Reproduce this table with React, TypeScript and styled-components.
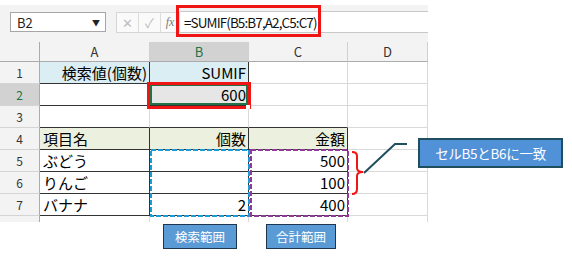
import React from "react";
import styled, { createGlobalStyle } from "styled-components";

const GlobalStyle = createGlobalStyle`
  html, body { margin: 0; padding: 0; background: #fff; }
  body { font-family: "Noto Sans CJK JP", "Noto Sans", sans-serif; }
`;

const DARK = "#333";
const GRID = "#d9d9d9";

const Page = styled.div`
  position: relative;
  width: 572px;
  height: 256px;
  overflow: hidden;
  background: #fff;
`;

const Sheet = styled.div`
  margin-top: 5px;
  width: 428px;
  background: #f3f3f3;
`;

const FormulaBar = styled.div`
  display: flex;
  align-items: flex-start;
  height: 37px;
  padding-top: 7px;
  box-sizing: border-box;
`;

const NameBox = styled.div`
  box-sizing: border-box;
  width: 96px;
  height: 20px;
  margin-left: 10px;
  padding: 0 5px 0 6px;
  background: #fff;
  border: 1px solid #a6a6a6;
  display: flex;
  align-items: center;
  justify-content: space-between;
  font-size: 13px;
  color: #222;
`;

const Arrow = styled.span`
  font-size: 8px;
  color: #222;
`;

const ButtonGroup = styled.div`
  box-sizing: border-box;
  display: flex;
  height: 21px;
  margin-left: 10px;
  background: #fafafa;
  border: 1px solid #d6d6d6;
  border-right: none;
`;

const BarButton = styled.div<{ $w: number }>`
  width: ${(p) => p.$w}px;
  display: flex;
  align-items: center;
  justify-content: center;
  border-right: 1px solid #dcdcdc;
  color: #bdbdbd;
  font-size: 13px;
`;

const Fx = styled.span`
  font-family: "Liberation Serif", serif;
  font-style: italic;
  font-size: 12px;
  color: #7a7a7a;
`;

const FormulaInput = styled.div`
  box-sizing: border-box;
  flex: 1;
  height: 22px;
  margin-top: -1px;
  padding-left: 4px;
  background: #fff;
  border-top: 1px solid #c8c8c8;
  border-bottom: 1px solid #c8c8c8;
  display: flex;
  align-items: center;
  font-size: 13.5px;
  letter-spacing: -0.9px;
  color: #111;
`;

const Grid = styled.div`
  display: grid;
  grid-template-columns: 40px 110px 99px 99px 80px;
  grid-template-rows: 20px repeat(8, 22px);
  height: 180px;
  overflow: hidden;
`;

const ColHead = styled.div<{ $sel?: boolean; $corner?: boolean }>`
  box-sizing: border-box;
  display: flex;
  align-items: center;
  justify-content: center;
  background: ${(p) => (p.$sel ? "#d2d2d2" : "#f3f3f3")};
  border-right: 1px solid ${(p) => (p.$corner ? "#ababab" : "#d0d0d0")};
  border-bottom: 1px solid #ababab;
  color: ${(p) => (p.$sel ? "#217346" : "#333")};
  font-size: 13px;
`;

const RowHead = styled.div<{ $sel?: boolean }>`
  box-sizing: border-box;
  display: flex;
  align-items: center;
  justify-content: center;
  background: ${(p) => (p.$sel ? "#d2d2d2" : "#f3f3f3")};
  border-right: 1px solid #ababab;
  border-bottom: 1px solid #d4d4d4;
  color: ${(p) => (p.$sel ? "#217346" : "#333")};
  font-size: 12px;
`;

const Cell = styled.div<{ $bg?: string; $align?: string; $r?: string; $b?: string; $active?: boolean }>`
  box-sizing: border-box;
  display: flex;
  align-items: center;
  justify-content: ${(p) => (p.$align === "right" ? "flex-end" : "flex-start")};
  padding: 0 2px 0 3px;
  background: ${(p) => p.$bg || "#fff"};
  border-right: 1px solid ${(p) => p.$r || GRID};
  border-bottom: 1px solid ${(p) => p.$b || GRID};
  box-shadow: ${(p) => (p.$active ? "inset 0 0 0 2px #217346" : "none")};
  font-size: 15px;
  color: #000;
  white-space: nowrap;
`;

const RedBox = styled.div<{ $x: number; $y: number; $w: number; $h: number }>`
  position: absolute;
  left: ${(p) => p.$x}px;
  top: ${(p) => p.$y}px;
  width: ${(p) => p.$w}px;
  height: ${(p) => p.$h}px;
  box-sizing: border-box;
  border: 3px solid #f01414;
`;

const Overlay = styled.svg`
  position: absolute;
  left: 0;
  top: 0;
  pointer-events: none;
`;

const Labels = styled.div`
  display: flex;
  gap: 29px;
  padding-left: 163px;
  margin-top: 2px;
`;

const Label = styled.div<{ $w: number }>`
  box-sizing: border-box;
  width: ${(p) => p.$w}px;
  height: 25px;
  display: flex;
  align-items: center;
  justify-content: center;
  background: #5b9bd5;
  border: 1px solid #1f3550;
  color: #fff;
  font-size: 12.5px;
`;

const Callout = styled.div`
  position: absolute;
  left: 418px;
  top: 138px;
  width: 145px;
  height: 30px;
  box-sizing: border-box;
  display: flex;
  align-items: center;
  justify-content: center;
  background: #5191d8;
  border: 2px solid #1f4e5f;
  color: #fff;
  font-size: 13.5px;
  letter-spacing: -0.3px;
`;

type C = { t?: string; align?: string; bg?: string; r?: string; b?: string; active?: boolean };

const BLUE = "#daeef3";
const GREEN = "#ebf1de";
const d = { r: DARK, b: DARK };

const rows: C[][] = [
  [
    { t: "検索値(個数)", align: "right", bg: BLUE, ...d },
    { t: "SUMIF", align: "right", bg: BLUE, ...d },
    {},
    {},
  ],
  [{ ...d }, { t: "600", align: "right", bg: "#e7e6e6", active: true, ...d }, {}, {}],
  [{ b: DARK }, { b: DARK }, { b: DARK }, {}],
  [
    { t: "項目名", bg: GREEN, ...d },
    { t: "個数", align: "right", bg: GREEN, ...d },
    { t: "金額", align: "right", bg: GREEN, ...d },
    {},
  ],
  [{ t: "ぶどう", ...d }, { ...d }, { t: "500", align: "right", ...d }, {}],
  [{ t: "りんご", ...d }, { ...d }, { t: "100", align: "right", ...d }, {}],
  [{ t: "バナナ", ...d }, { t: "2", align: "right", ...d }, { t: "400", align: "right", ...d }, {}],
  [{}, {}, {}, {}],
];

export default function App() {
  return (
    <Page>
      <GlobalStyle />
      <Sheet>
        <FormulaBar>
          <NameBox>
            <span>B2</span>
            <Arrow>▼</Arrow>
          </NameBox>
          <ButtonGroup>
            <BarButton $w={21}>✕</BarButton>
            <BarButton $w={21}>✓</BarButton>
            <BarButton $w={18}>
              <Fx>fx</Fx>
            </BarButton>
          </ButtonGroup>
          <FormulaInput>=SUMIF(B5:B7,A2,C5:C7)</FormulaInput>
        </FormulaBar>
        <Grid>
          <ColHead $corner />
          <ColHead>A</ColHead>
          <ColHead $sel>B</ColHead>
          <ColHead>C</ColHead>
          <ColHead>D</ColHead>
          {rows.map((row, i) => (
            <React.Fragment key={i}>
              <RowHead $sel={i === 1}>{i < 7 ? i + 1 : ""}</RowHead>
              {row.map((c, j) => (
                <Cell key={j} $bg={c.bg} $align={c.align} $r={c.r} $b={c.b} $active={c.active}>
                  {c.t}
                </Cell>
              ))}
            </React.Fragment>
          ))}
        </Grid>
      </Sheet>
      <Labels>
        <Label $w={74}>検索範囲</Label>
        <Label $w={70}>合計範囲</Label>
      </Labels>

      <RedBox $x={176} $y={5} $w={145} $h={32} />
      <RedBox $x={147} $y={82} $w={104} $h={27} />

      <Overlay width={572} height={256}>
        <rect x={151} y={150} width={98} height={66} fill="none" stroke="#1a9ad6" strokeWidth={2} strokeDasharray="5 2" />
        <rect x={251} y={150} width={97} height={66} fill="none" stroke="#8e3a96" strokeWidth={2} strokeDasharray="5 2" />
        <rect x={246} y={105} width={4} height={4} fill="#fff" />
        <path
          d="M352 152 Q357 152 357 156 L357 168 Q357 172 363 172 Q357 172 357 176 L357 189 Q357 194 352 194"
          fill="none"
          stroke="#f01414"
          strokeWidth={2}
        />
        <path d="M364 173 L395 144 L407 144" fill="none" stroke="#1f4e5f" strokeWidth={2} />
      </Overlay>
      <Callout>セルB5とB6に一致</Callout>
    </Page>
  );
}
